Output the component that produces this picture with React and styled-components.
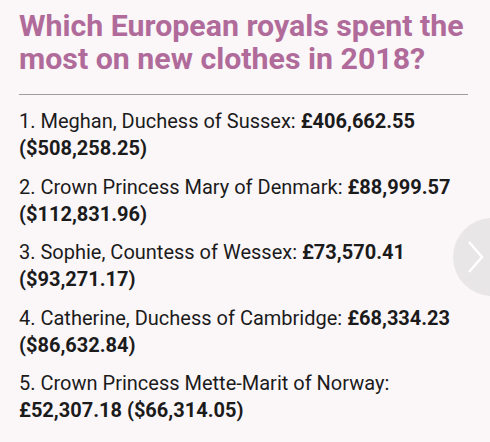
import styled, { createGlobalStyle } from "styled-components"

const Global = createGlobalStyle`
html, body {
  margin: 0;
  background: #fbf7f9;
}
body {
  font-family: Roboto, "Noto Sans", sans-serif;
  overflow: hidden;
}
`

const Page = styled.main`
position: relative;
width: 490px;
height: 442px;
padding: 9px 20px 0 19px;
box-sizing: border-box;
overflow: hidden;
`

const Title = styled.h1`
margin: 0;
font-size: 30.3px;
line-height: 33px;
font-weight: 700;
color: #b06b9a;
`

const Divider = styled.hr`
margin: 19px 2px 13px 0;
border: none;
border-top: 1.5px solid #a39aa0;
`

const List = styled.ol`
list-style: none;
margin: 0;
padding: 0;
display: flex;
flex-direction: column;
gap: 11.5px;
`

const Item = styled.li`
font-size: 20px;
line-height: 27px;
color: #1c1b1c;
strong {
  font-weight: 700;
}
`

// half of the round "next" button peeks in from the right edge
const NextButton = styled.div`
position: absolute;
left: 453px;
top: 218px;
width: 78px;
height: 78px;
border-radius: 50%;
background: #e9e6e8;
display: flex;
align-items: center;
padding-left: 14px;
box-sizing: border-box;
`

const royals = [
  ["1. Meghan, Duchess of Sussex: ", "£406,662.55 ($508,258.25)"],
  ["2. Crown Princess Mary of Denmark: ", "£88,999.57 ($112,831.96)"],
  ["3. Sophie, Countess of Wessex: ", "£73,570.41 ($93,271.17)"],
  ["4. Catherine, Duchess of Cambridge: ", "£68,334.23 ($86,632.84)"],
  ["5. Crown Princess Mette-Marit of Norway: ", "£52,307.18 ($66,314.05)"],
]

export default function App() {
  return <Page>
    <Global />
    <Title>Which European royals spent the most on new clothes in 2018?</Title>
    <Divider />
    <List>
      {royals.map(([name, amount]) => (
        <Item key={name}>{name}<strong>{amount}</strong></Item>
      ))}
    </List>
    <NextButton>
      <svg width="17" height="34" viewBox="0 0 17 34">
        <path d="M2 2 L15 17 L2 32" fill="none" stroke="#fff" strokeWidth="2.5" />
      </svg>
    </NextButton>
  </Page>
}
